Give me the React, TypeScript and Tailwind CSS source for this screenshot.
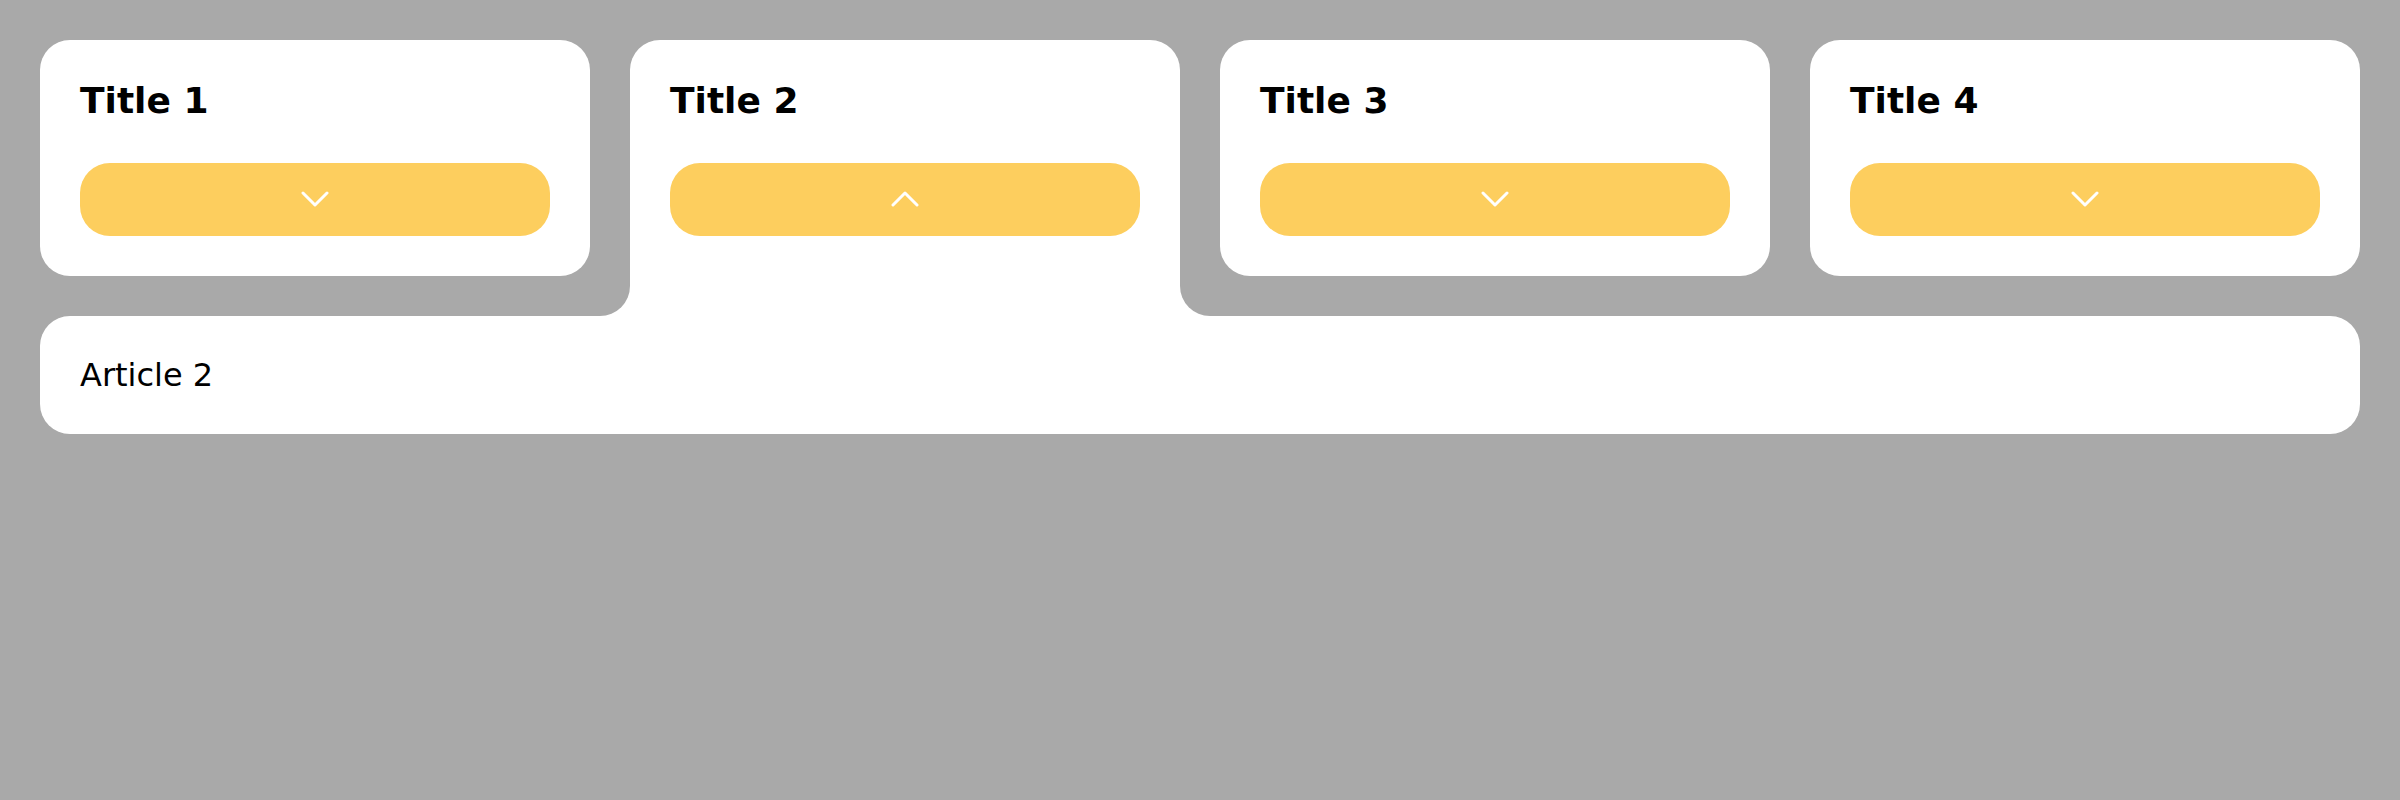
import React, { useState } from 'react';

const titles = ['Title 1', 'Title 2', 'Title 3', 'Title 4'];

function Chevron({ up }: { up: boolean }) {
  return (
    <svg width="28" height="16" viewBox="0 0 28 16" fill="none" stroke="white" strokeWidth="3" strokeLinecap="round" strokeLinejoin="round">
      {up ? <polyline points="2,14 14,2 26,14" /> : <polyline points="2,2 14,14 26,2" />}
    </svg>
  );
}

export default function App() {
  const [open, setOpen] = useState<number | null>(1);

  return (
    <div className="min-h-screen bg-[#a9a9a9] p-10 text-black" style={{ fontFamily: '"DejaVu Sans", Verdana, sans-serif' }}>
      <div className="grid grid-cols-4 gap-x-10 items-start">
        {titles.map((title, i) => {
          const isOpen = open === i;
          return (
            <div key={title} className="flex flex-col">
              <div className={`bg-white p-10 ${isOpen ? 'rounded-t-[30px]' : 'rounded-[30px]'}`}>
                <h2 className="text-[36px] leading-[42.5px] font-bold mb-10">{title}</h2>
                <button
                  onClick={() => setOpen(isOpen ? null : i)}
                  className="w-full h-[73px] rounded-[30px] bg-[#fdce5e] flex items-center justify-center"
                >
                  <Chevron up={isOpen} />
                </button>
              </div>
              {isOpen && (
                <div className="relative h-10 bg-white">
                  {/* inverse corners where the tab meets the article */}
                  <div className="absolute -left-[30px] bottom-0 w-[30px] h-[30px] bg-white">
                    <div className="w-full h-full bg-[#a9a9a9] rounded-br-[30px]" />
                  </div>
                  <div className="absolute -right-[30px] bottom-0 w-[30px] h-[30px] bg-white">
                    <div className="w-full h-full bg-[#a9a9a9] rounded-bl-[30px]" />
                  </div>
                </div>
              )}
            </div>
          );
        })}
      </div>
      {open !== null ? (
        <div className="bg-white rounded-[30px] p-10">
          <p className="text-[32px] leading-[normal]">Article {open + 1}</p>
        </div>
      ) : null}
    </div>
  );
}
